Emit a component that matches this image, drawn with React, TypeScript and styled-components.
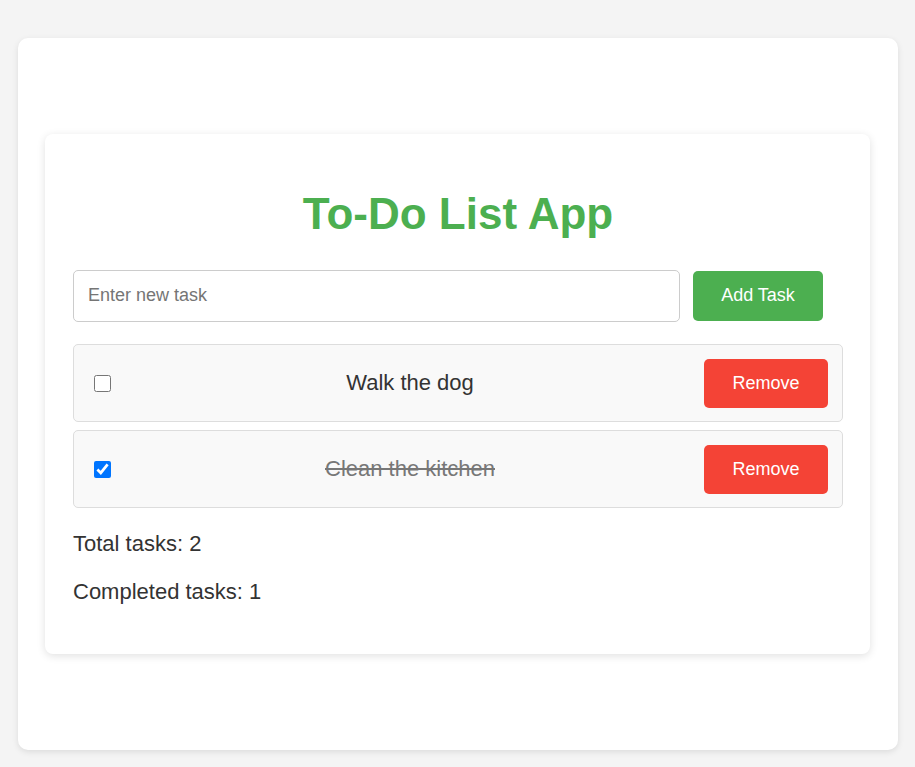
import React, { useState } from "react";
import styled, { createGlobalStyle } from "styled-components";

const GlobalStyle = createGlobalStyle`
  html, body {
    margin: 0;
    padding: 0;
    background: #f4f4f4;
    font-family: "Liberation Sans", Arial, sans-serif;
  }
`;

const Page = styled.div`
  padding: 38px 17px 17px 18px;
`;

const Shell = styled.div`
  height: 712px;
  box-sizing: border-box;
  padding: 0 28px 0 27px;
  background: #ffffff;
  border-radius: 10px;
  box-shadow: 0 2px 6px rgba(0, 0, 0, 0.1);
  display: flex;
  align-items: center;
`;

const Card = styled.div`
  width: 825px;
  box-sizing: border-box;
  background: #ffffff;
  border-radius: 8px;
  box-shadow: 0 2px 8px rgba(0, 0, 0, 0.12);
  padding: 32px 27px 49px 28px;
`;

const Title = styled.h1`
  margin: 23px 0 30px;
  text-align: center;
  color: #4caf50;
  font-size: 44px;
  font-weight: bold;
  line-height: 1.15;
`;

const InputRow = styled.div`
  display: flex;
  align-items: center;
  gap: 13px;
  margin-bottom: 22px;
`;

const TaskInput = styled.input`
  width: 607px;
  height: 52px;
  box-sizing: border-box;
  padding: 0 14px;
  border: 1px solid #ccc;
  border-radius: 5px;
  font-family: inherit;
  font-size: 18px;
  color: #333;
  &::placeholder {
    color: #757575;
  }
`;

const Button = styled.button<{ $tone: "green" | "red"; $w: number }>`
  width: ${(p) => p.$w}px;
  height: ${(p) => (p.$tone === "green" ? 50 : 49)}px;
  border: none;
  border-radius: 5px;
  background: ${(p) => (p.$tone === "green" ? "#4caf50" : "#f44336")};
  color: #fff;
  font-family: inherit;
  font-size: 18px;
  cursor: pointer;
`;

const List = styled.ul`
  list-style: none;
  margin: 0;
  padding: 0;
  display: flex;
  flex-direction: column;
  gap: 8px;
`;

const Item = styled.li`
  display: flex;
  align-items: center;
  padding: 14px 14px 13px 20px;
  background: #f9f9f9;
  border: 1px solid #ddd;
  border-radius: 5px;
`;

const Check = styled.input`
  width: 17px;
  height: 17px;
  margin: 0 5px 0 0;
  accent-color: #0075ff;
`;

const TaskText = styled.span<{ $done: boolean }>`
  flex: 1;
  text-align: center;
  font-size: 22px;
  color: ${(p) => (p.$done ? "#777" : "#333")};
  text-decoration: ${(p) => (p.$done ? "line-through" : "none")};
`;

const Stats = styled.div`
  margin-top: 23px;
  display: flex;
  flex-direction: column;
  gap: 22px;
`;

const Stat = styled.p`
  margin: 0;
  font-size: 22px;
  line-height: 26px;
  color: #333;
`;

type Task = { id: number; text: string; done: boolean };

export default function App() {
  const [tasks, setTasks] = useState<Task[]>([
    { id: 1, text: "Walk the dog", done: false },
    { id: 2, text: "Clean the kitchen", done: true },
  ]);
  const [draft, setDraft] = useState("");

  const add = () => {
    if (!draft.trim()) return;
    setTasks([...tasks, { id: Date.now(), text: draft.trim(), done: false }]);
    setDraft("");
  };

  return (
    <>
      <GlobalStyle />
      <Page>
        <Shell>
          <Card>
            <Title>To-Do List App</Title>
            <InputRow>
              <TaskInput
                placeholder="Enter new task"
                value={draft}
                onChange={(e) => setDraft(e.target.value)}
              />
              <Button $tone="green" $w={130} onClick={add}>
                Add Task
              </Button>
            </InputRow>
            <List>
              {tasks.map((t) => (
                <Item key={t.id}>
                  <Check
                    type="checkbox"
                    checked={t.done}
                    onChange={() =>
                      setTasks(tasks.map((x) => (x.id === t.id ? { ...x, done: !x.done } : x)))
                    }
                  />
                  <TaskText $done={t.done}>{t.text}</TaskText>
                  <Button
                    $tone="red"
                    $w={124}
                    onClick={() => setTasks(tasks.filter((x) => x.id !== t.id))}
                  >
                    Remove
                  </Button>
                </Item>
              ))}
            </List>
            <Stats>
              <Stat>Total tasks: {tasks.length}</Stat>
              <Stat>Completed tasks: {tasks.filter((t) => t.done).length}</Stat>
            </Stats>
          </Card>
        </Shell>
      </Page>
    </>
  );
}
